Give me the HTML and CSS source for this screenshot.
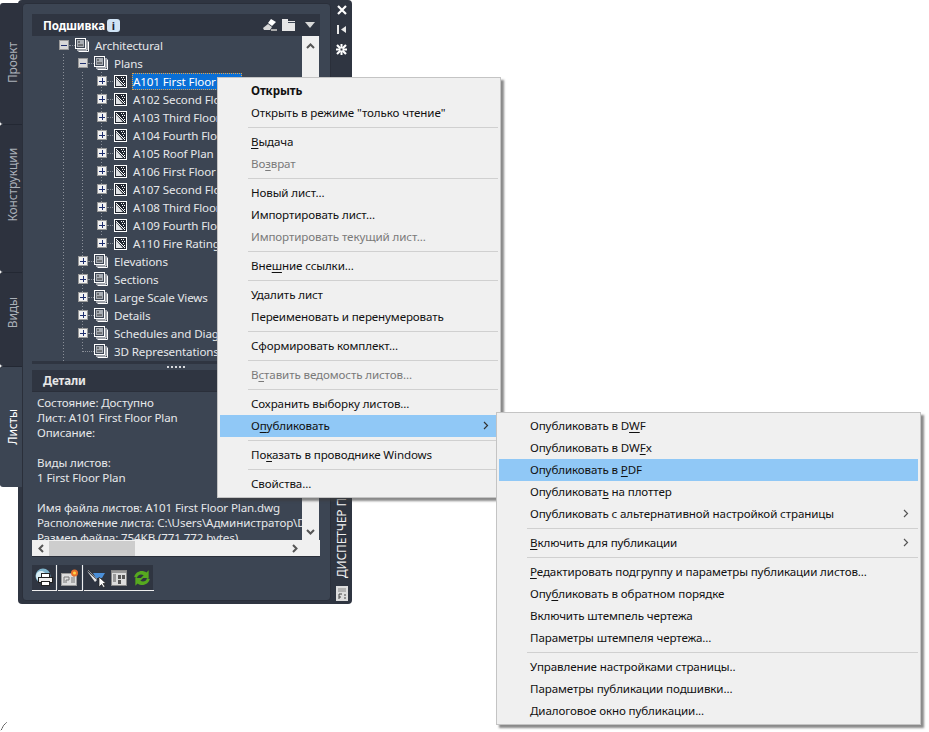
FILE: index.html
```html
<!DOCTYPE html>
<html lang="ru">
<head>
  <meta charset="UTF-8">
  <title>Подшивка</title>
  <link rel="stylesheet" href="styles.css">
</head>
<body>
  <svg class="defs" width="0" height="0">
    <symbol id="ico-set" viewBox="0 0 14 14">
      <path d="M3.500 13.500h10v-10M2 12h10V2" fill="none" stroke="#fff"/>
      <rect x=".5" y=".5" width="10" height="10" fill="#3c4553" stroke="#fff"/>
      <rect x="2" y="2" width="7" height="7" fill="#a8adb4"/>
      <path d="M3 7h5M3 4h2" stroke="#333"/>
    </symbol>
    <symbol id="ico-sheet" viewBox="0 0 13 13">
      <rect x=".5" y=".5" width="12" height="12" fill="#20252f" stroke="#fff"/>
      <path d="M2 2l9 9" fill="none" stroke="#fff"/>
      <path d="M2 3l7 8H2z" fill="#dfe1e4"/>
      <path d="M7 2h1v1H7zM9 2h1v1H9zM8 4h1v1H8zM10 4h1v1h-1zM9 6h1v1H9zM10 8h1v1h-1z" fill="#fff"/>
    </symbol>
  </svg>

  <div class="palette">
    <div class="tabs">
      <div class="tab tab-project"><span>Проект</span></div>
      <div class="tab tab-build"><span>Конструкции</span></div>
      <div class="tab tab-views"><span>Виды</span></div>
      <div class="tab tab-sheets active"><span>Листы</span></div>
    </div>

    <div class="shell">
      <div class="panel">
        <div class="title-bar">
          <b>Подшивка</b><span class="info">i</span>
          <div class="title-tools">
            <svg width="14" height="12" viewBox="0 0 14 12"><path d="M0 9l5-4 4 3-2 3H1z" fill="#d8d8d8"/><path d="M5 4l3-4 5 3-4 4z" fill="#fff"/><path d="M8 11h6" stroke="#aaa" stroke-width="2"/></svg>
            <svg width="13" height="12" viewBox="0 0 13 12"><path d="M0 0h6v2h7v10H0z" fill="#e6e6e6"/><path d="M6 3.500h7" stroke="#3c4553"/></svg>
            <svg class="tool-drop" width="10" height="6" viewBox="0 0 10 6"><path d="M0 0h10L5 6z" fill="#d8d8d8"/></svg>
          </div>
        </div>

        <div class="tree-wrap">
          <div class="tree">
            <div class="row lv0"><span class="box minus"></span><i class="dash"></i><svg class="ico"><use href="#ico-set"/></svg><span class="name">Architectural</span></div>
            <div class="row lv1"><span class="box minus"></span><i class="dash"></i><svg class="ico"><use href="#ico-set"/></svg><span class="name">Plans</span></div>
            <div class="sheets">
              <div class="row lv2"><span class="box"></span><i class="dash"></i><svg class="ico-s"><use href="#ico-sheet"/></svg><span class="name selected">A101 First Floor Plan</span></div>
              <div class="row lv2"><span class="box"></span><i class="dash"></i><svg class="ico-s"><use href="#ico-sheet"/></svg><span class="name">A102 Second Floor Plan</span></div>
              <div class="row lv2"><span class="box"></span><i class="dash"></i><svg class="ico-s"><use href="#ico-sheet"/></svg><span class="name">A103 Third Floor Plan</span></div>
              <div class="row lv2"><span class="box"></span><i class="dash"></i><svg class="ico-s"><use href="#ico-sheet"/></svg><span class="name">A104 Fourth Floor Plan</span></div>
              <div class="row lv2"><span class="box"></span><i class="dash"></i><svg class="ico-s"><use href="#ico-sheet"/></svg><span class="name">A105 Roof Plan</span></div>
              <div class="row lv2"><span class="box"></span><i class="dash"></i><svg class="ico-s"><use href="#ico-sheet"/></svg><span class="name">A106 First Floor Plan</span></div>
              <div class="row lv2"><span class="box"></span><i class="dash"></i><svg class="ico-s"><use href="#ico-sheet"/></svg><span class="name">A107 Second Floor Plan</span></div>
              <div class="row lv2"><span class="box"></span><i class="dash"></i><svg class="ico-s"><use href="#ico-sheet"/></svg><span class="name">A108 Third Floor Plan</span></div>
              <div class="row lv2"><span class="box"></span><i class="dash"></i><svg class="ico-s"><use href="#ico-sheet"/></svg><span class="name">A109 Fourth Floor Plan</span></div>
              <div class="row lv2"><span class="box"></span><i class="dash"></i><svg class="ico-s"><use href="#ico-sheet"/></svg><span class="name">A110 Fire Rating Plan</span></div>
            </div>
            <div class="row lv1"><span class="box"></span><i class="dash"></i><svg class="ico"><use href="#ico-set"/></svg><span class="name">Elevations</span></div>
            <div class="row lv1"><span class="box"></span><i class="dash"></i><svg class="ico"><use href="#ico-set"/></svg><span class="name">Sections</span></div>
            <div class="row lv1"><span class="box"></span><i class="dash"></i><svg class="ico"><use href="#ico-set"/></svg><span class="name">Large Scale Views</span></div>
            <div class="row lv1"><span class="box"></span><i class="dash"></i><svg class="ico"><use href="#ico-set"/></svg><span class="name">Details</span></div>
            <div class="row lv1"><span class="box"></span><i class="dash"></i><svg class="ico"><use href="#ico-set"/></svg><span class="name">Schedules and Diagrams</span></div>
            <div class="row lv1 leaf"><i class="dash"></i><svg class="ico"><use href="#ico-set"/></svg><span class="name">3D Representations</span></div>
          </div>
          <div class="vscroll top">
            <svg width="9" height="6" viewBox="0 0 9 6"><path d="M1 5l3.500-3.500L8 5" fill="none" stroke="#555" stroke-width="2"/></svg>
          </div>
        </div>

        <div class="grip"><i></i><i></i><i></i><i></i><i></i></div>
        <div class="details-bar"><b>Детали</b></div>

        <div class="details-wrap">
          <div class="details">
            <div>Состояние: Доступно</div>
            <div>Лист: A101 First Floor Plan</div>
            <div>Описание:</div>
            <div>&nbsp;</div>
            <div>Виды листов:</div>
            <div>1 First Floor Plan</div>
            <div>&nbsp;</div>
            <div>Имя файла листов: A101 First Floor Plan.dwg</div>
            <div>Расположение листа: C:\Users\Администратор\Documents</div>
            <div>Размер файла: 754KB (771 772 bytes)</div>
          </div>
          <div class="vscroll bottom">
            <svg width="9" height="6" viewBox="0 0 9 6"><path d="M1 1l3.500 3.500L8 1" fill="none" stroke="#555" stroke-width="2"/></svg>
          </div>
        </div>
        <div class="hscroll">
          <svg width="6" height="9" viewBox="0 0 6 9"><path d="M5 1L1.500 4.500 5 8" fill="none" stroke="#555" stroke-width="2"/></svg>
          <div class="thumb"></div>
          <svg width="6" height="9" viewBox="0 0 6 9"><path d="M1 1l3.500 3.500L1 8" fill="none" stroke="#555" stroke-width="2"/></svg>
        </div>

        <div class="toolbar">
          <div class="tool-group">
            <span class="tool"><svg width="20" height="20" viewBox="0 0 20 20"><circle cx="9" cy="8" r="7.500" fill="#7fb4cc"/><circle cx="7" cy="8" r="5" fill="#d9eef5"/><rect x="7.500" y="5.500" width="8" height="4" fill="#fff" stroke="#222"/><rect x="4.500" y="9.500" width="14" height="5" fill="#eee" stroke="#222"/><rect x="7.500" y="13.500" width="8" height="4" fill="#fff" stroke="#222"/></svg></span>
          </div>
          <div class="tool-group">
            <span class="tool"><svg width="18" height="18" viewBox="0 0 18 18"><rect x=".5" y="4.500" width="15" height="12" fill="#ddd" stroke="#999"/><path d="M3 14V8h5v3M5 14v-3h3M11 14V8M13 14V7" fill="none" stroke="#777"/><circle cx="13.500" cy="4" r="3.500" fill="#e8702a"/><circle cx="13.500" cy="4" r="1.500" fill="#ffd54a"/></svg></span>
          </div>
          <div class="tool-group">
            <span class="tool"><svg width="20" height="20" viewBox="0 0 20 20"><path d="M1 3l10 9-2 2z" fill="#e8e8e8"/><path d="M2 2l9 9" stroke="#888"/><path d="M7 5h12l-3 5h-6z" fill="#4b8fd8"/><path d="M13 9v10l2.500-2.500 2 3 1.500-1-2-3h3z" fill="#fff" stroke="#222" stroke-width=".7"/></svg></span>
            <span class="tool"><svg width="16" height="16" viewBox="0 0 16 16"><rect x=".5" y=".5" width="15" height="15" fill="#ddd" stroke="#888"/><rect x="1" y="1" width="14" height="2" fill="#999"/><path d="M2 5h3M2 7h3M2 9h3M2 11h3" stroke="#555"/><path d="M7 5h3v4H7zM11 5h3v4h-3zM7 10h3v4H7z" fill="#555"/></svg></span>
            <span class="tool"><svg width="20" height="20" viewBox="0 0 18 18"><path d="M2 8c1-5 7-7 11-4l2-2v7H8l2.500-2.500C8 5 5 6 4.500 9zM16 10c-1 5-7 7-11 4l-2 2V9h7l-2.500 2.500C10 13 13 12 13.500 9z" fill="#56a91f"/></svg></span>
          </div>
        </div>
      </div>

      <div class="strip">
        <div class="strip-tools">
          <svg width="10" height="10" viewBox="0 0 10 10"><path d="M1 1l8 8M9 1L1 9" stroke="#fff" stroke-width="2.200"/></svg>
          <svg width="9" height="9" viewBox="0 0 9 9"><path d="M0 0h2v9H0zM9 1v7L4 4.500z" fill="#e8e8e8"/></svg>
          <svg width="11" height="11" viewBox="0 0 11 11"><path d="M1 1l9 9M10 1l-9 9" stroke="#fff" stroke-width="2.200"/><path d="M5.500 0v11M0 5.500h11" stroke="#fff" stroke-width="2"/><path d="M4.500 4.500h2v2h-2z" fill="#2f3541"/></svg>
        </div>
        <div class="strip-name"><span>ДИСПЕТЧЕР ПОДШИВОК</span></div>
        <svg class="strip-ico" width="12" height="15" viewBox="0 0 12 15"><path d="M0 0h12v15H0z" fill="#ddd"/><path d="M2 3h8M2 5h8" stroke="#888"/><path d="M3 8v5M3 8h3M3 11h2M8 9h2M8 12h2" stroke="#444"/></svg>
      </div>
    </div>
  </div>

  <div class="menu main-menu">
    <div class="item strong">Открыть</div>
    <div class="item">Открыть в режиме "только чтение"</div>
    <div class="sep"></div>
    <div class="item"><u>В</u>ыдача</div>
    <div class="item off">Во<u>з</u>врат</div>
    <div class="sep"></div>
    <div class="item">Новый лист...</div>
    <div class="item">Импортировать лист...</div>
    <div class="item off">Импортировать текущий лист...</div>
    <div class="sep"></div>
    <div class="item">Вне<u>ш</u>ние ссылки...</div>
    <div class="sep"></div>
    <div class="item">Удалить лист</div>
    <div class="item">Переименовать и перенумеровать</div>
    <div class="sep"></div>
    <div class="item">Сформировать комплект...</div>
    <div class="sep"></div>
    <div class="item off">В<u>с</u>тавить ведомость листов...</div>
    <div class="sep"></div>
    <div class="item">Сохранить выборку листов...</div>
    <div class="item hot"><svg class="more" width="6" height="9" viewBox="0 0 6 9"><path d="M1 1l3.500 3.500L1 8" fill="none" stroke="#333" stroke-width="1.200"/></svg>О<u>п</u>убликовать</div>
    <div class="sep"></div>
    <div class="item">По<u>к</u>азать в проводнике Windows</div>
    <div class="sep"></div>
    <div class="item">Свойства...</div>
  </div>

  <div class="menu sub-menu">
    <div class="item">Опубликовать в D<u>W</u>F</div>
    <div class="item">Опубликовать в DW<u>F</u>x</div>
    <div class="item hot">Опубликовать в <u>P</u>DF</div>
    <div class="item">Опубликоват<u>ь</u> на плоттер</div>
    <div class="item"><svg class="more" width="6" height="9" viewBox="0 0 6 9"><path d="M1 1l3.500 3.500L1 8" fill="none" stroke="#555" stroke-width="1.200"/></svg>Опубликовать с альтернативной настройкой страницы</div>
    <div class="sep"></div>
    <div class="item"><svg class="more" width="6" height="9" viewBox="0 0 6 9"><path d="M1 1l3.500 3.500L1 8" fill="none" stroke="#555" stroke-width="1.200"/></svg><u>В</u>ключить для публикации</div>
    <div class="sep"></div>
    <div class="item"><u>Р</u>едактировать подгруппу и параметры публикации листов...</div>
    <div class="item">Опу<u>б</u>ликовать в обратном порядке</div>
    <div class="item">Включить штемпель чертежа</div>
    <div class="item">Параметры штемпеля чертежа...</div>
    <div class="sep"></div>
    <div class="item">Управление настройками страницы..</div>
    <div class="item">Параметры публикации подшивки...</div>
    <div class="item">Диалоговое окно публикации...</div>
  </div>

  <svg class="corner-mark" width="8" height="12" viewBox="0 0 8 12"><path d="M6.500.5l-1 1-1 1-1 1-1 2-1 2-1 1" fill="none" stroke="#222" stroke-dasharray="1.500 .5"/></svg>
</body>
</html>
```

FILE: styles.css
```css
* {
  box-sizing: border-box;
}

body {
  margin: 0;
  width: 929px;
  height: 732px;
  position: relative;
  overflow: hidden;
  background: #fff;
  font-family: "Noto Sans", "Open Sans", sans-serif;
  font-size: 11.6px;
  letter-spacing: -0.12px;
  color: #e6e8ea;
}

.defs {
  position: absolute;
}

/* palette window */
.palette {
  position: absolute;
  left: 0;
  top: 0;
  display: flex;
  width: 352px;
  height: 604px;
}

.tabs {
  width: 22px;
  margin-right: -4px;
  padding-top: 3px;
  display: flex;
  flex-direction: column;
  gap: 1px;
  position: relative;
  z-index: 1;
}

.tab {
  background: #2d323e;
  color: #aab0b8;
  display: flex;
  justify-content: center;
  align-items: flex-start;
  padding-left: 3px;
  border-radius: 3px 0 0 3px;
}

.tab + .tab {
  box-shadow: 0 -1px 0 #232833;
}

.tab span {
  writing-mode: vertical-rl;
  transform: rotate(180deg);
  line-height: 22px;
  font-size: 12px;
}

.tab-project { height: 121px; padding-top: 39px; }
.tab-build { height: 147px; padding-top: 23px; }
.tab-views { height: 93px; padding-top: 24px; }
.tab-sheets { height: 120px; padding-top: 42px; }

.tab.active {
  background: #3c4553;
  color: #fff;
}

.shell {
  flex: 1;
  display: flex;
  background: #2f3541;
  border-radius: 4px;
  padding: 3px 0 3px 4px;
}

.panel {
  width: 309px;
  background: #3c4553;
  border-radius: 4px;
  border: 1px solid #2a2f3a;
  padding: 10px 10px 0 9px;
  display: flex;
  flex-direction: column;
}

.title-bar {
  height: 22px;
  background: #2f3541;
  display: flex;
  align-items: center;
  padding-left: 11px;
  color: #fff;
  flex: none;
}

.info {
  width: 13px;
  height: 13px;
  margin-left: 2px;
  background: #cfe3f5;
  color: #223;
  border-radius: 3px;
  font-size: 11px;
  font-weight: 700;
  line-height: 13px;
  text-align: center;
}

.title-tools {
  margin-left: auto;
  display: flex;
  align-items: center;
  gap: 5px;
  padding-right: 5px;
}

.tool-drop {
  margin-left: 5px;
}

/* sheet tree */
.tree-wrap {
  height: 325px;
  display: flex;
  flex: none;
}

.tree {
  width: 270px;
  overflow: hidden;
  background-image:
    repeating-linear-gradient(#8a8f98 0 1px, transparent 1px 3px),
    repeating-linear-gradient(#8a8f98 0 1px, transparent 1px 3px);
  background-size: 1px 100%, 1px 280px;
  background-position: 31px 18px, 50px 36px;
  background-repeat: no-repeat;
  white-space: nowrap;
}

.row {
  height: 18px;
  display: flex;
  align-items: center;
}

.lv0 { padding-left: 27px; }
.lv1 { padding-left: 46px; }
.lv2 { padding-left: 65px; }
.lv1.leaf { padding-left: 50px; }

.sheets {
  background-image: repeating-linear-gradient(#8a8f98 0 1px, transparent 1px 3px);
  background-size: 1px 165px;
  background-position: 69px 0;
  background-repeat: no-repeat;
}

.box {
  width: 10px;
  height: 10px;
  flex: none;
  border: 1px solid #9a9a9a;
  background:
    linear-gradient(#1f2f6e, #1f2f6e) center / 6px 1px no-repeat,
    linear-gradient(#1f2f6e, #1f2f6e) center / 1px 6px no-repeat,
    #f2f2f2;
}

.box.minus {
  background:
    linear-gradient(#1f2f6e, #1f2f6e) center / 6px 1px no-repeat,
    #d8d8d8;
}

.dash {
  width: 6px;
  flex: none;
  border-top: 1px dotted #8a8f98;
}

.leaf .dash {
  width: 12px;
}

.ico {
  width: 14px;
  height: 14px;
  flex: none;
}

.ico-s {
  width: 13px;
  height: 13px;
  flex: none;
  margin-left: 1px;
}

.name {
  margin-left: 5px;
  padding: 0 1px;
  line-height: 17px;
}

.name.selected {
  width: 110px;
  background: #0a6fd6;
  color: #fff;
  outline: 1px dotted #e8a040;
  outline-offset: -1px;
}

.vscroll {
  width: 17px;
  background: #f0f0f0;
  display: flex;
  justify-content: center;
  flex: none;
}

.vscroll.top {
  padding-top: 7px;
}

.vscroll.bottom {
  align-items: flex-end;
  padding-bottom: 5px;
}

.grip {
  height: 9px;
  flex: none;
  border-top: 3px solid #2f3541;
  display: flex;
  justify-content: center;
  align-items: center;
  gap: 2px;
}

.grip i {
  width: 2px;
  height: 2px;
  background: #d8dade;
}

.details-bar {
  height: 21px;
  flex: none;
  background: #2f3541;
  color: #e8e8e8;
  display: flex;
  align-items: center;
  padding-left: 11px;
}

.details-wrap {
  height: 149px;
  flex: none;
  display: flex;
  border-top: 1px solid #2a2f3a;
}

.details {
  width: 270px;
  padding: 3px 0 0 5px;
  line-height: 15px;
  white-space: nowrap;
  overflow: hidden;
}

.hscroll {
  height: 17px;
  flex: none;
  background: #f0f0f0;
  display: flex;
  align-items: center;
  padding: 0 22px 0 6px;
  border-bottom: 1px solid #2a2f3a;
}

.thumb {
  width: 86px;
  height: 15px;
  margin-left: 5px;
  margin-right: auto;
  background: #cdcdcd;
}

.toolbar {
  display: flex;
  margin-top: 8px;
}

.tool-group {
  display: flex;
  padding-right: 1px;
  margin-right: 1px;
  border-bottom: 1px solid #eee;
  border-right: 1px solid #eee;
}

.tool-group:last-child {
  border-right: 0;
}

.tool {
  width: 23px;
  height: 25px;
  background: #2f3541;
  display: flex;
  align-items: center;
  justify-content: center;
}

/* right strip */
.strip {
  flex: 1;
  display: flex;
  flex-direction: column;
  align-items: center;
  padding-top: 2px;
}

.strip-tools {
  display: flex;
  flex-direction: column;
  align-items: center;
  gap: 10px;
}

.strip-name {
  margin-top: auto;
  display: flex;
  height: 260px;
  align-items: flex-end;
  color: #f0f0f0;
  padding-bottom: 8px;
}

.strip-name span {
  writing-mode: vertical-rl;
  transform: rotate(180deg);
  white-space: nowrap;
  font-size: 12px;
}

.strip-ico {
  flex: none;
}

/* context menus */
.menu {
  position: absolute;
  background: #f0f0f0;
  border: 1px solid #c4c4c4;
  padding: 2px;
  color: #111;
  box-shadow: 3px 3px 2px rgba(60, 60, 60, 0.6);
}

.main-menu {
  left: 217px;
  top: 77px;
  width: 284px;
}

.sub-menu {
  left: 496px;
  top: 412px;
  width: 425px;
}

.item {
  height: 22px;
  line-height: 22px;
  padding-left: 31px;
  white-space: nowrap;
}

.item u {
  text-underline-offset: 2px;
}

.strong {
  font-weight: 700;
}

.off {
  color: #7a7a7a;
}

.hot {
  background: #90c8f6;
}

.more {
  float: right;
  margin: 6px 9px 0 0;
}

.sep {
  height: 7px;
  margin-left: 28px;
  padding: 3px 0;
}

.sep::before {
  content: "";
  display: block;
  height: 1px;
  background: #d0d0d0;
}

.corner-mark {
  position: absolute;
  left: 0;
  top: 722px;
}
```
